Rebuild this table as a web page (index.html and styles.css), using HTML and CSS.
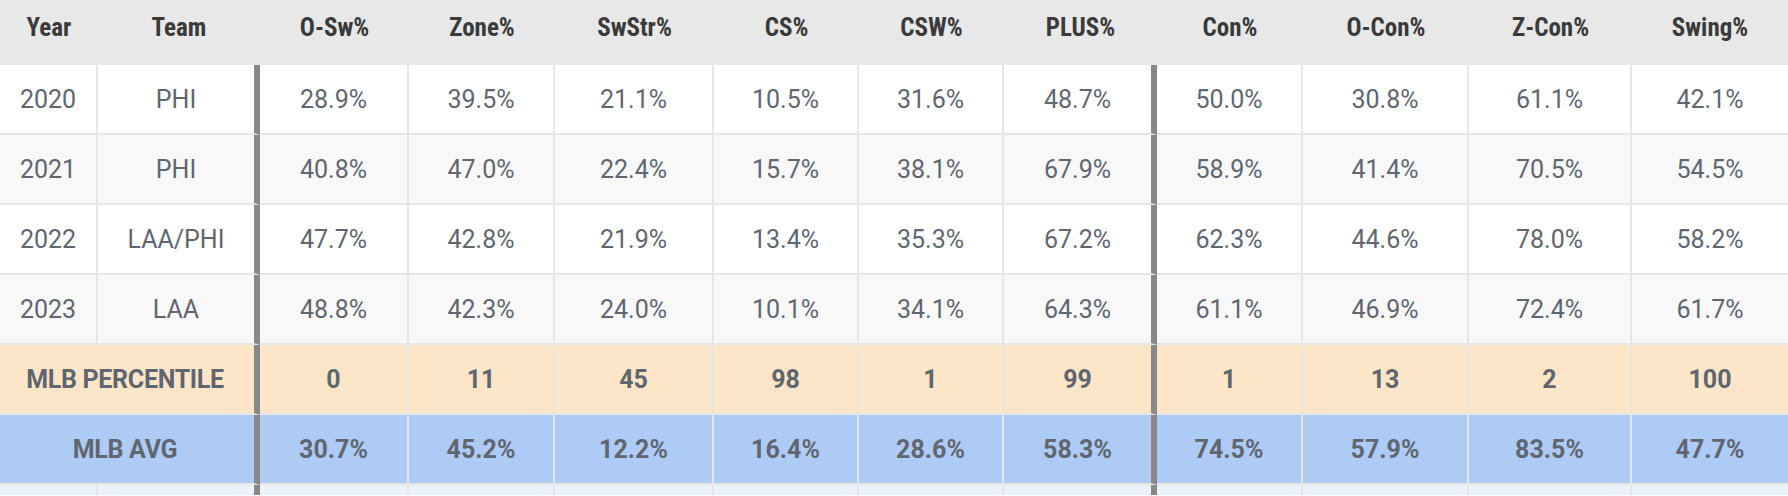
FILE: index.html
```html
<!DOCTYPE html>
<html lang="en">
<head>
<meta charset="utf-8">
<title>Plate Discipline</title>
<link rel="stylesheet" href="styles.css">
</head>
<body>
<table class="stats">
  <colgroup>
    <col class="c-year"><col class="c-team"><col class="c-osw"><col class="c-zone"><col class="c-swstr"><col class="c-cs"><col class="c-csw"><col class="c-plus"><col class="c-con"><col class="c-ocon"><col class="c-zcon"><col class="c-swing">
  </colgroup>
  <thead>
    <tr>
      <th>Year</th><th>Team</th><th>O-Sw%</th><th>Zone%</th><th>SwStr%</th><th>CS%</th><th>CSW%</th><th>PLUS%</th><th>Con%</th><th>O-Con%</th><th>Z-Con%</th><th>Swing%</th>
    </tr>
  </thead>
  <tbody>
    <tr class="row-light">
      <td>2020</td><td class="sep">PHI</td><td>28.9%</td><td>39.5%</td><td>21.1%</td><td>10.5%</td><td>31.6%</td><td class="sep">48.7%</td><td>50.0%</td><td>30.8%</td><td>61.1%</td><td class="last">42.1%</td>
    </tr>
    <tr class="row-shade">
      <td>2021</td><td class="sep">PHI</td><td>40.8%</td><td>47.0%</td><td>22.4%</td><td>15.7%</td><td>38.1%</td><td class="sep">67.9%</td><td>58.9%</td><td>41.4%</td><td>70.5%</td><td class="last">54.5%</td>
    </tr>
    <tr class="row-light">
      <td>2022</td><td class="sep">LAA/PHI</td><td>47.7%</td><td>42.8%</td><td>21.9%</td><td>13.4%</td><td>35.3%</td><td class="sep">67.2%</td><td>62.3%</td><td>44.6%</td><td>78.0%</td><td class="last">58.2%</td>
    </tr>
    <tr class="row-shade">
      <td>2023</td><td class="sep">LAA</td><td>48.8%</td><td>42.3%</td><td>24.0%</td><td>10.1%</td><td>34.1%</td><td class="sep">64.3%</td><td>61.1%</td><td>46.9%</td><td>72.4%</td><td class="last">61.7%</td>
    </tr>
    <tr class="row-pct">
      <td colspan="2" class="sep label">MLB PERCENTILE</td><td>0</td><td>11</td><td>45</td><td>98</td><td>1</td><td class="sep">99</td><td>1</td><td>13</td><td>2</td><td class="last">100</td>
    </tr>
    <tr class="row-avg">
      <td colspan="2" class="sep label">MLB AVG</td><td>30.7%</td><td>45.2%</td><td>12.2%</td><td>16.4%</td><td>28.6%</td><td class="sep">58.3%</td><td>74.5%</td><td>57.9%</td><td>83.5%</td><td class="last">47.7%</td>
    </tr>
    <tr class="row-tail">
      <td></td><td class="sep"></td><td></td><td></td><td></td><td></td><td></td><td class="sep"></td><td></td><td></td><td></td><td class="last"></td>
    </tr>
  </tbody>
</table>
</body>
</html>
```
FILE: styles.css
```css
html, body {
  margin: 0;
  padding: 0;
  background: #ffffff;
  overflow: hidden;
}

.stats {
  width: 1788px;
  table-layout: fixed;
  border-collapse: separate;
  border-spacing: 0;
  font-family: Roboto, "Noto Sans", sans-serif;
}

.c-year { width: 98px; }
.c-team { width: 162px; }
.c-osw { width: 149px; }
.c-zone { width: 146px; }
.c-swstr { width: 159px; }
.c-cs { width: 145px; }
.c-csw { width: 145px; }
.c-plus { width: 153px; }
.c-con { width: 146px; }
.c-ocon { width: 166px; }
.c-zcon { width: 163px; }
.c-swing { width: 156px; }

.stats th {
  height: 65px;
  box-sizing: border-box;
  padding: 0 0 10px 0;
  background: #e8e8e8;
  color: #3a3a3a;
  font-family: "Roboto Condensed", Roboto, sans-serif;
  font-stretch: condensed;
  font-weight: 700;
  font-size: 25px;
  text-align: center;
  vertical-align: middle;
}

.stats td {
  height: 70px;
  box-sizing: border-box;
  padding: 0;
  border-right: 2px solid #e6e6e6;
  border-bottom: 2px solid #e6e6e6;
  color: #5f6670;
  font-size: 25px;
  font-weight: 400;
  text-align: center;
  vertical-align: middle;
}

.stats td.sep {
  border-right: 6px solid #888888;
}

.stats td.last {
  border-right: none;
}

.stats td.label {
  letter-spacing: -0.3px;
  padding-right: 4px;
}

.row-light td { background: #ffffff; }
.row-shade td { background: #f8f8f8; }

.row-pct td {
  background: #fde6c8;
  font-weight: 700;
}

.row-avg td {
  background: #aecbf5;
  font-weight: 700;
}

.stats .row-tail td {
  height: 10px;
  background: #eaf2fd;
  border-bottom: none;
}
```
